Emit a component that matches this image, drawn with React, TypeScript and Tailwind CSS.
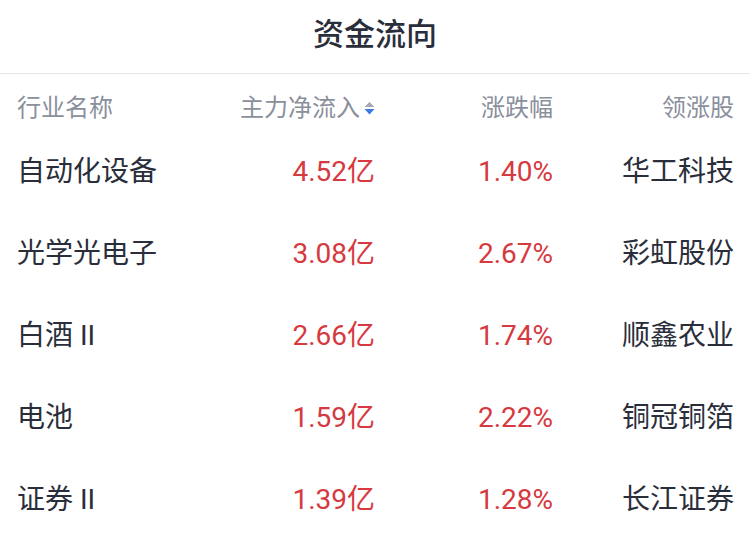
import React from "react";

const rows = [
  { name: "自动化设备", flow: "4.52亿", pct: "1.40%", lead: "华工科技" },
  { name: "光学光电子", flow: "3.08亿", pct: "2.67%", lead: "彩虹股份" },
  { name: "白酒 II", flow: "2.66亿", pct: "1.74%", lead: "顺鑫农业" },
  { name: "电池", flow: "1.59亿", pct: "2.22%", lead: "铜冠铜箔" },
  { name: "证券 II", flow: "1.39亿", pct: "1.28%", lead: "长江证券" },
];

const font = { fontFamily: '"Roboto", "Noto Sans CJK SC", sans-serif' };

export default function App() {
  return (
    <div className="w-[750px] h-[548px] bg-white overflow-hidden" style={font}>
      <div className="h-[74px] border-b border-[#e6e6e6] flex items-center justify-center pb-[3px]">
        <span className="text-[31px] font-medium text-[#2a2e3a]">资金流向</span>
      </div>
      <div className="grid grid-cols-[183px_175px_178px_181px] pl-[17px] pr-[16px]">
        <div className="h-[57px] pt-[11px] flex items-center text-[24px] text-[#8a8f9c]">行业名称</div>
        <div className="h-[57px] pt-[11px] flex items-center justify-end gap-[4px] text-[24px] text-[#8a8f9c]">
          <span>主力净流入</span>
          <svg width="11" height="15" viewBox="0 0 11 15" className="mt-[1px]">
            <path d="M5.5 1 L10.5 6 L0.5 6 Z" fill="#a3a8b3" />
            <path d="M0.5 8 L10.5 8 L5.5 13.5 Z" fill="#3a7be0" />
          </svg>
        </div>
        <div className="h-[57px] pt-[11px] flex items-center justify-end text-[24px] text-[#8a8f9c]">涨跌幅</div>
        <div className="h-[57px] pt-[11px] flex items-center justify-end text-[24px] text-[#8a8f9c]">领涨股</div>
        {rows.map((r) => (
          <React.Fragment key={r.name}>
            <div className="h-[82px] flex items-center text-[28px] text-[#2a2e3a]">{r.name}</div>
            <div className="h-[82px] flex items-center justify-end text-[28px] text-[#d6393f]">{r.flow}</div>
            <div className="h-[82px] flex items-center justify-end text-[28px] text-[#d6393f]">{r.pct}</div>
            <div className="h-[82px] flex items-center justify-end text-[28px] text-[#2a2e3a]">{r.lead}</div>
          </React.Fragment>
        ))}
      </div>
    </div>
  );
}
